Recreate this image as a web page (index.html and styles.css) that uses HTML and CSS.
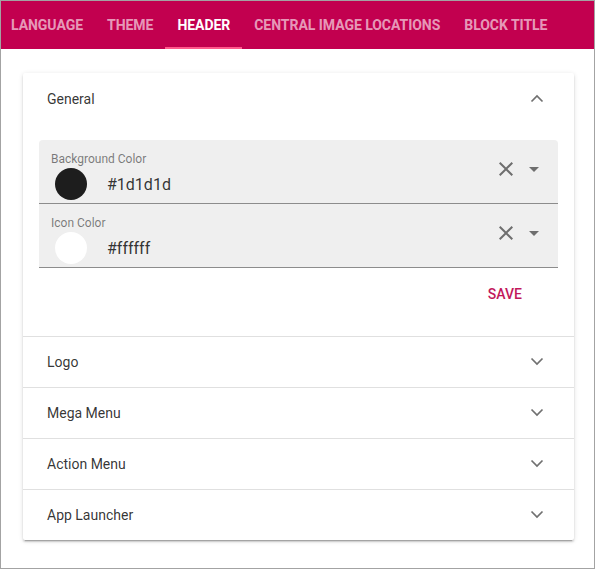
FILE: index.html
```html
<!DOCTYPE html>
<html>
<head>
<meta charset="utf-8">
<link rel="stylesheet" href="styles.css">
</head>
<body>
<div class="frame">
  <nav class="tabs">
    <div class="tab">Language</div>
    <div class="tab">Theme</div>
    <div class="tab active">Header</div>
    <div class="tab">Central Image Locations</div>
    <div class="tab">Block Title</div>
  </nav>
  <main class="content">
    <section class="card">
      <div class="panel expanded">
        <div class="panel-header">
          <span class="panel-title">General</span>
          <svg class="chev" viewBox="0 0 24 24"><polyline points="6.5,14.5 12,9 17.5,14.5"/></svg>
        </div>
        <div class="panel-body">
          <div class="field">
            <div class="field-main">
              <div class="field-label">Background Color</div>
              <div class="field-row">
                <span class="swatch dark"></span>
                <span class="field-value">#1d1d1d</span>
              </div>
            </div>
            <div class="field-icons">
              <svg class="ico" viewBox="0 0 24 24"><path d="M19 6.41L17.59 5 12 10.59 6.41 5 5 6.41 10.59 12 5 17.59 6.41 19 12 13.41 17.59 19 19 17.59 13.41 12z"/></svg>
              <svg class="ico" viewBox="0 0 24 24"><path d="M7 10l5 5 5-5z"/></svg>
            </div>
          </div>
          <div class="field">
            <div class="field-main">
              <div class="field-label">Icon Color</div>
              <div class="field-row">
                <span class="swatch light"></span>
                <span class="field-value">#ffffff</span>
              </div>
            </div>
            <div class="field-icons">
              <svg class="ico" viewBox="0 0 24 24"><path d="M19 6.41L17.59 5 12 10.59 6.41 5 5 6.41 10.59 12 5 17.59 6.41 19 12 13.41 17.59 19 19 17.59 13.41 12z"/></svg>
              <svg class="ico" viewBox="0 0 24 24"><path d="M7 10l5 5 5-5z"/></svg>
            </div>
          </div>
          <div class="actions">
            <button class="save">Save</button>
          </div>
        </div>
      </div>
      <div class="panel">
        <div class="panel-header">
          <span class="panel-title">Logo</span>
          <svg class="chev" viewBox="0 0 24 24"><polyline points="6.5,8.5 12,14 17.5,8.5"/></svg>
        </div>
      </div>
      <div class="panel">
        <div class="panel-header">
          <span class="panel-title">Mega Menu</span>
          <svg class="chev" viewBox="0 0 24 24"><polyline points="6.5,8.5 12,14 17.5,8.5"/></svg>
        </div>
      </div>
      <div class="panel">
        <div class="panel-header">
          <span class="panel-title">Action Menu</span>
          <svg class="chev" viewBox="0 0 24 24"><polyline points="6.5,8.5 12,14 17.5,8.5"/></svg>
        </div>
      </div>
      <div class="panel">
        <div class="panel-header">
          <span class="panel-title">App Launcher</span>
          <svg class="chev" viewBox="0 0 24 24"><polyline points="6.5,8.5 12,14 17.5,8.5"/></svg>
        </div>
      </div>
    </section>
  </main>
</div>
</body>
</html>
```

FILE: styles.css
```css
* { box-sizing: border-box; }
html, body { margin: 0; padding: 0; background: #fff; }
body { font-family: Roboto, "Liberation Sans", sans-serif; color: rgba(0,0,0,0.87); }

.frame {
  width: 595px;
  height: 569px;
  border: 1px solid #a3a3a3;
  overflow: hidden;
  background: #fff;
}

.tabs {
  display: flex;
  height: 48px;
  background: #c2004f;
  margin-left: -2px;
}
.tab {
  position: relative;
  padding: 0 12px;
  display: flex;
  align-items: center;
  font-size: 14px;
  font-weight: 700;
  letter-spacing: -0.04px;
  text-transform: uppercase;
  color: rgba(255,255,255,0.62);
  white-space: nowrap;
}
.tab.active { color: #fff; }
.tab.active::after {
  content: "";
  position: absolute;
  left: 0; right: 0; bottom: 0;
  height: 2px;
  background: #ff5a8c;
}

.content {
  padding: 24px 20px 0 22px;
}

.card {
  background: #fff;
  box-shadow: 0 3px 1px -2px rgba(0,0,0,.2), 0 2px 2px 0 rgba(0,0,0,.14), 0 1px 5px 0 rgba(0,0,0,.12);
  border-radius: 2px;
}

.panel + .panel { border-top: 1px solid #e0e0e0; }

.panel-header {
  height: 50px;
  padding: 0 24px 0 24px;
  display: flex;
  align-items: center;
  justify-content: space-between;
}
.panel.expanded .panel-header { height: 52px; }
.panel-title { font-size: 14px; color: rgba(0,0,0,0.8); }
.chev {
  width: 24px;
  height: 24px;
  fill: none;
  stroke: #707070;
  stroke-width: 1.7;
  margin-right: 1px;
}

.panel-body {
  padding: 15px 16px 0 16px;
}

.field {
  display: flex;
  justify-content: space-between;
  height: 64px;
  background: #efefef;
  border-bottom: 1px solid #8c8c8c;
  padding: 0 12px;
}
.field:first-child { border-radius: 4px 4px 0 0; }
.field-main { display: flex; flex-direction: column; }
.field-label {
  margin-top: 11px;
  font-size: 12px;
  line-height: 16px;
  color: rgba(0,0,0,0.5);
}
.field-row {
  display: flex;
  align-items: center;
  margin-top: 1px;
  padding-left: 4px;
}
.swatch {
  width: 32px;
  height: 32px;
  border-radius: 50%;
  flex: none;
}
.swatch.dark { background: #1d1d1d; }
.swatch.light { background: #ffffff; }
.field-value {
  margin-left: 20px;
  font-size: 16px;
  color: rgba(0,0,0,0.8);
}
.field-icons {
  display: flex;
  gap: 4px;
  margin-top: 17px;
}
.ico { width: 24px; height: 24px; fill: rgba(0,0,0,0.54); }

.actions {
  display: flex;
  justify-content: flex-end;
  padding: 8px 20px 24px 0;
}
.save {
  height: 36px;
  padding: 0 16px;
  border: 0;
  background: transparent;
  font-family: Roboto, "Liberation Sans", sans-serif;
  font-size: 14px;
  font-weight: 500;
  text-transform: uppercase;
  color: #c2185b;
}
```
